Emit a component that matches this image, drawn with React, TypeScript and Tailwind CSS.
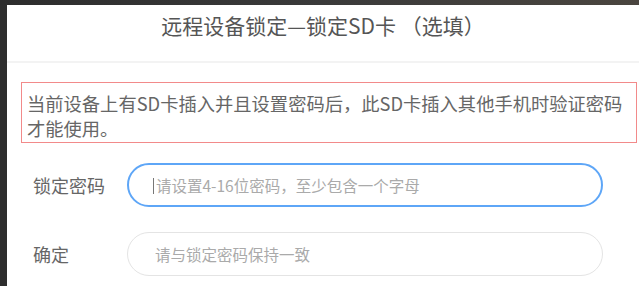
import { useState } from 'react';

const FONT = { fontFamily: '"Noto Sans CJK SC", "Noto Sans", sans-serif' };

function Field({ label, placeholder, active }: { label: string; placeholder: string; active?: boolean }) {
    const [value, setValue] = useState('');
    return (
        <div className="flex items-center h-[44px]">
            <div className="w-[120px] shrink-0 pl-[26px] whitespace-nowrap text-[18px] text-[#666] leading-none">{label}</div>
            <div className="relative w-[476px] h-full">
                <input
                    type="password"
                    value={value}
                    onChange={(e) => setValue(e.target.value)}
                    placeholder={placeholder}
                    style={FONT}
                    className={`w-full h-full rounded-full bg-white pl-[27px] pr-4 text-[15.5px] text-[#555] outline-none placeholder:text-[#aaa] ${
                        active ? 'border-2 border-[#5ea6f7]' : 'border border-[#e4e4e4]'
                    }`}
                />
                {active && value === '' && (
                    <span className="absolute left-[26px] top-[15px] h-[16px] w-[1px] bg-[#777]" />
                )}
            </div>
        </div>
    );
}

export default function App() {
    return (
        <div className="w-[639px] h-[286px] flex flex-col bg-[#2e2e2e] overflow-hidden" style={FONT}>
            <div className="h-[5px] shrink-0 bg-gradient-to-r from-[#2d2d2d] via-[#3a3a3a] to-[#4a453f]" />
            <div className="flex flex-1">
                <div className="w-[7px] shrink-0 bg-[#2e2e2e]" />
                <div className="flex-1 bg-white">
                    <div className="h-[58px] pt-[8px] border-b-2 border-[#f3f3f3] text-center">
                        <h1 className="text-[21px] leading-[24px] text-[#555] font-normal">
                            远程设备锁定—锁定SD卡 （选填）
                        </h1>
                    </div>

                    <div className="mt-[19px] ml-[14px] mr-[2px] border border-[#f28a8a] pl-[5px] pt-[8px] pb-[1px] text-[18.3px] leading-[25px] text-[#666]">
                        当前设备上有SD卡插入并且设置密码后，此SD卡插入其他手机时验证密码
                        <br />
                        才能使用。
                    </div>

                    <div className="mt-[20px] flex flex-col gap-[25px]">
                        <Field label="锁定密码" placeholder="请设置4-16位密码，至少包含一个字母" active />
                        <Field label="确定" placeholder="请与锁定密码保持一致" />
                    </div>
                </div>
            </div>
        </div>
    );
}
